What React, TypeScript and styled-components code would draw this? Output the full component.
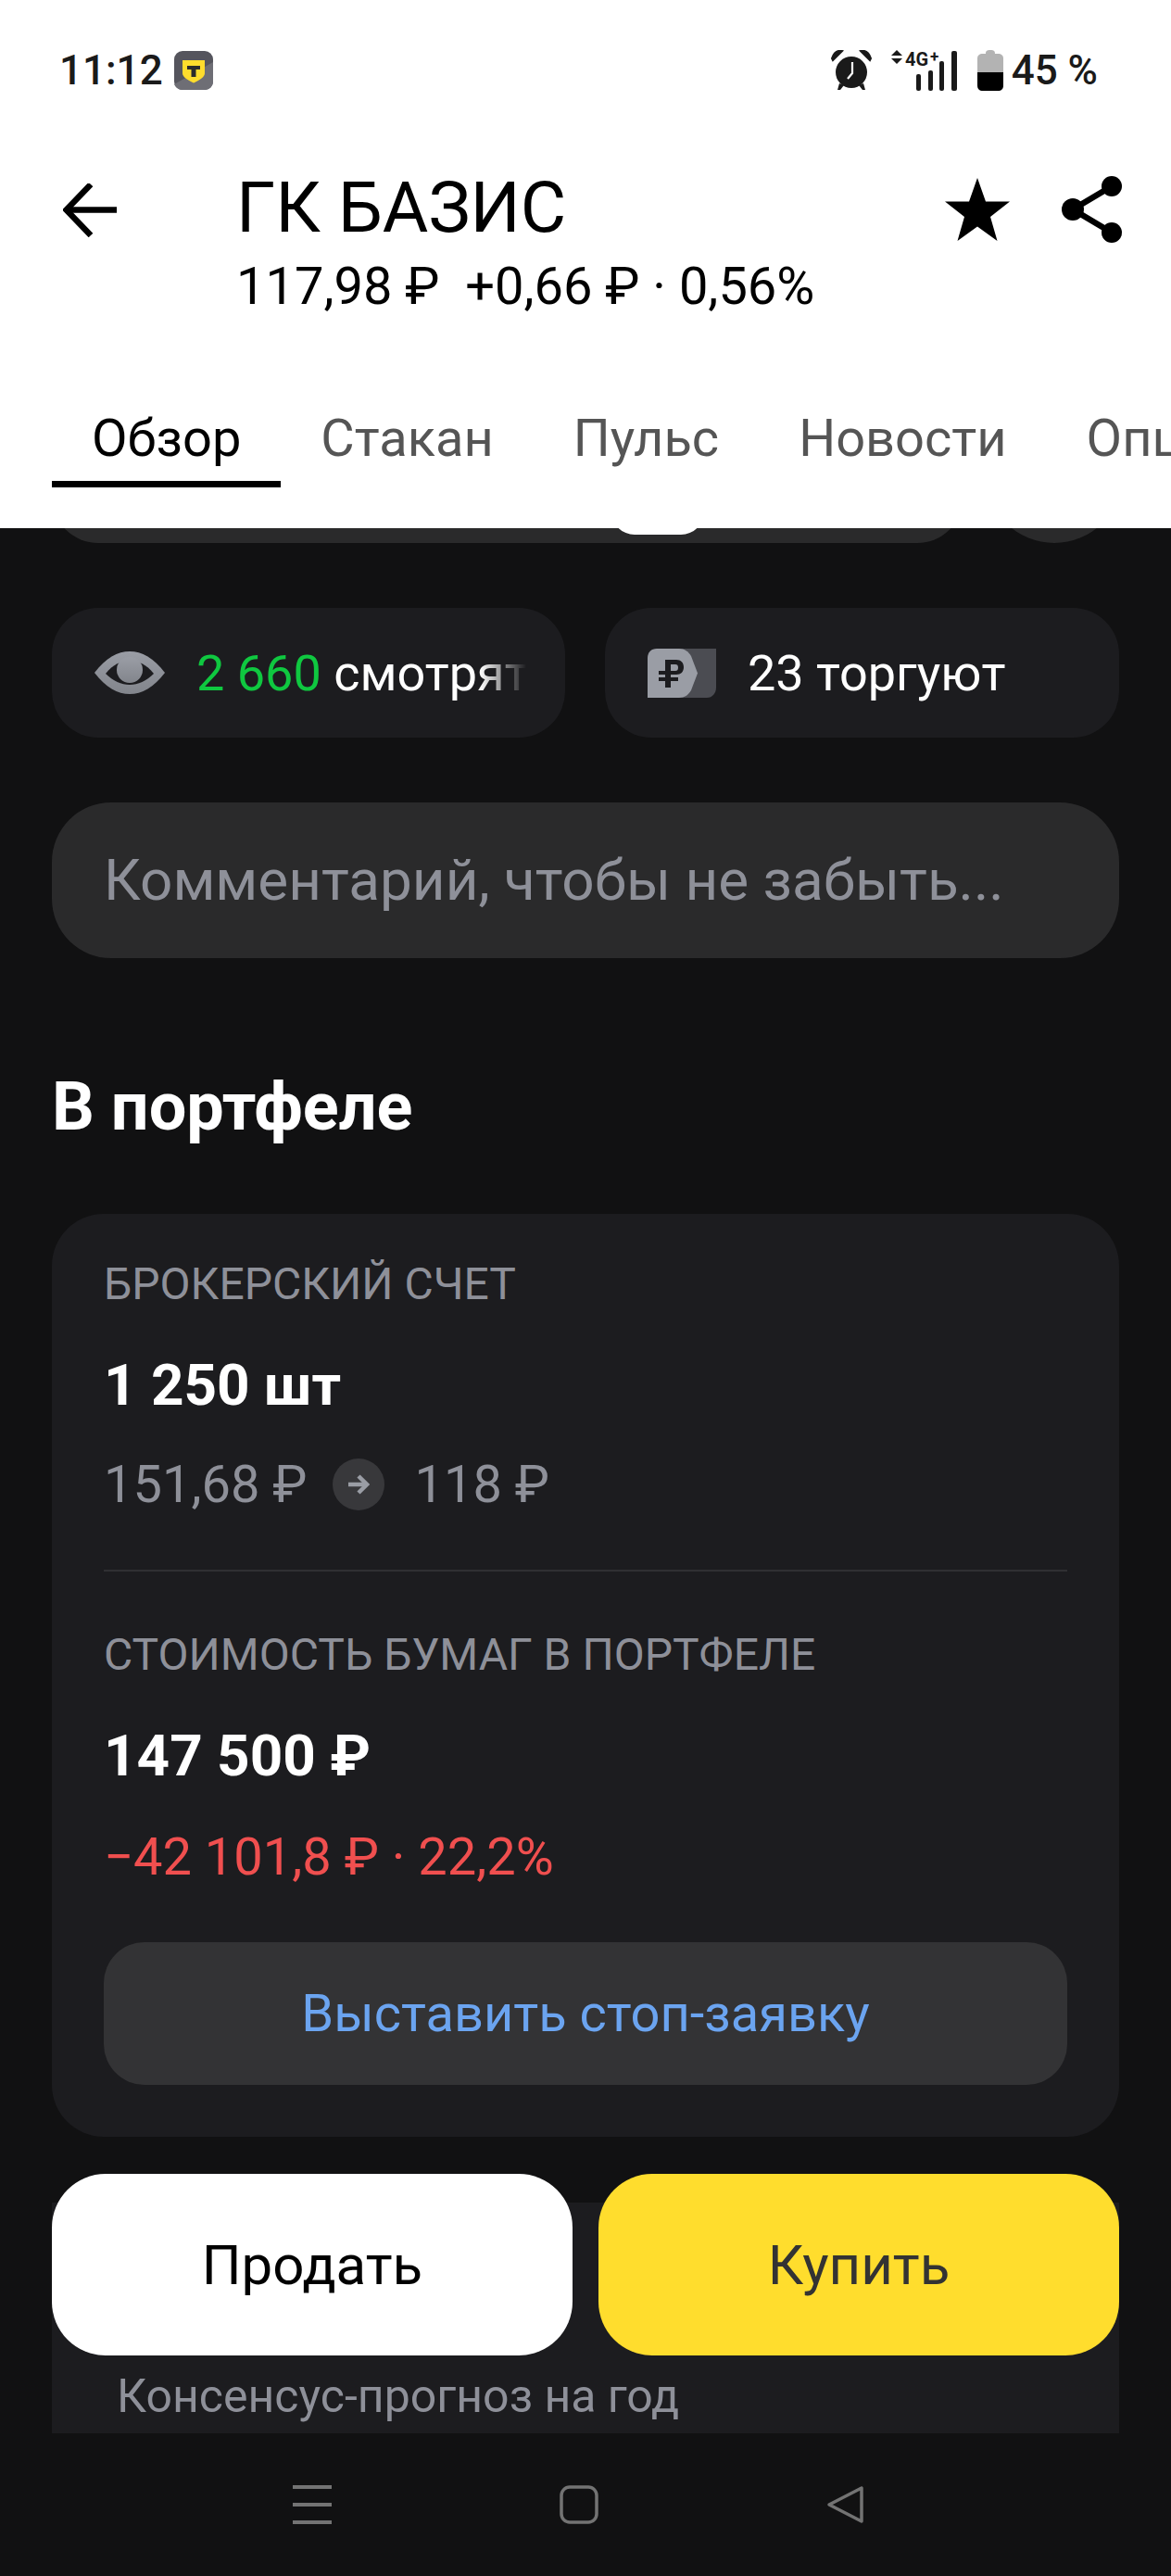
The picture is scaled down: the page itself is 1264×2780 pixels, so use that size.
import React, { FC, ReactNode } from 'react'
import styled, { createGlobalStyle } from 'styled-components'

const GlobalStyle = createGlobalStyle`
  html, body {
    margin: 0;
    padding: 0;
    background: #111112;
  }
  * {
    box-sizing: border-box;
  }
`

const BackIcon: FC = () => (
  <svg width="58" height="58" viewBox="0 0 58 58" fill="none" stroke="#000" strokeWidth="6.5">
    <path d="M58 28.5H4" />
    <path d="M30 1L3.5 28.5L30 56" />
  </svg>
)

const StarIcon: FC = () => (
  <svg width="70" height="68" viewBox="0 0 70 68" fill="#000">
    <path d="M35 0L44 25.5H70L49 42L56.5 68L35 52.5L13.5 68L21 42L0 25.5H26Z" />
  </svg>
)

const ShareIcon: FC = () => (
  <svg width="66" height="72" viewBox="0 0 66 72" fill="#000" stroke="#000">
    <path d="M54 11L12 36L54 61" fill="none" strokeWidth="6.5" />
    <circle cx="54" cy="11" r="11" stroke="none" />
    <circle cx="12" cy="36" r="12" stroke="none" />
    <circle cx="54" cy="61" r="11" stroke="none" />
  </svg>
)

const AlarmIcon: FC = () => (
  <svg width="44" height="44" viewBox="0 0 44 44" fill="#1a1a1a">
    <circle cx="22" cy="24" r="17" />
    <path d="M1 9C3 3 7 0 12 1L2 11Z" stroke="#1a1a1a" strokeWidth="2" />
    <path d="M43 9C41 3 37 0 32 1L42 11Z" stroke="#1a1a1a" strokeWidth="2" />
    <path d="M9 36L7 43H10L14 38Z" />
    <path d="M35 36L37 43H34L30 38Z" />
    <path d="M23 13V25L18 31" fill="none" stroke="#fff" strokeWidth="2.2" />
  </svg>
)

const SignalIcon: FC = () => (
  <svg width="72" height="44" viewBox="0 0 72 44" fill="#1a1a1a">
    <path d="M0 6L6 0L12 6Z" />
    <path d="M0 9L6 15L12 9Z" />
    <rect x="27" y="26" width="5" height="18" rx="2" />
    <rect x="40" y="22" width="5" height="22" rx="2" />
    <rect x="52" y="12" width="5" height="32" rx="2" />
    <rect x="65" y="1" width="6" height="43" rx="2" />
    <text x="15" y="17" fontFamily="Roboto, sans-serif" fontSize="20" fontWeight="700">4G</text>
    <text x="42" y="13" fontFamily="Roboto, sans-serif" fontSize="17" fontWeight="700">+</text>
  </svg>
)

const BatteryIcon: FC = () => (
  <svg width="28" height="44" viewBox="0 0 28 44">
    <path d="M9 4C9 1 10 0 14 0S19 1 19 4H22C26 4 28 6 28 9V24H0V9C0 6 2 4 6 4Z" fill="#b3b3b3" />
    <path d="M0 24H28V38C28 42 26 44 22 44H6C2 44 0 42 0 38Z" fill="#000" />
  </svg>
)

const BankIcon: FC = () => (
  <svg width="42" height="42" viewBox="0 0 42 42">
    <rect width="42" height="42" rx="9" fill="#55555d" />
    <path d="M0 36L42 12V33C42 38 38 42 33 42H9C5 42 2 40 0 36Z" fill="#6e6e75" />
    <path d="M9 10H33V24C33 28 28 31 21 34.5C14 31 9 28 9 24Z" fill="#ffdd2d" />
    <path d="M14 16H28V20H23.5V28H18.5V20H14Z" fill="#2c2c2c" />
  </svg>
)

const EyeIcon: FC = () => (
  <svg width="76" height="46" viewBox="0 0 76 46">
    <defs>
      <linearGradient id="eyeFill" x1="0" y1="0" x2="0" y2="1">
        <stop offset="0" stopColor="#9a9da5" />
        <stop offset="1" stopColor="#82858c" />
      </linearGradient>
    </defs>
    <path d="M0 23C12 7 25 0 38 0S64 7 76 23C64 39 51 46 38 46S12 39 0 23Z" fill="url(#eyeFill)" />
    <path d="M12 24C20 14 29 10 38 10S56 14 64 24C56 32 47 36 38 36S20 32 12 24Z" fill="#1c1c1f" />
    <circle cx="38" cy="20" r="14" fill="url(#eyeFill)" />
  </svg>
)

const RubleIcon: FC = () => (
  <svg width="74" height="53" viewBox="0 0 74 53">
    <path d="M30 0H74V42C74 48 70 53 64 53H30Z" fill="#4b4c52" />
    <path d="M10 0H34C40 0 44 3 47 8L54 26.5L47 45C44 50 40 53 34 53H0V10C0 4 4 0 10 0Z" fill="#9a9da5" />
    <path d="M20 12H31C36 12 39 15 39 20C39 25 36 28 31 28H25V31H33V35H25V42H19V35H12V31H19V28H12V24H19V12ZM25 17V24H30C32 24 33 23 33 20.5C33 18 32 17 30 17Z" fill="#1c1c1f" />
  </svg>
)

const ArrowIcon: FC = () => (
  <svg width="24" height="22" viewBox="0 0 24 22" fill="none" stroke="#9a9da5" strokeWidth="4.5">
    <path d="M1 11H20" />
    <path d="M12 2L21 11L12 20" />
  </svg>
)

const MenuIcon: FC = () => (
  <svg width="42" height="42" viewBox="0 0 42 42" fill="#737373">
    <rect y="0" width="42" height="4" />
    <rect y="19" width="42" height="4" />
    <rect y="38" width="42" height="4" />
  </svg>
)

const HomeIcon: FC = () => (
  <svg width="42" height="42" viewBox="0 0 42 42" fill="none" stroke="#737373" strokeWidth="3.5">
    <rect x="2" y="2" width="38" height="38" rx="9" />
  </svg>
)

const TriangleIcon: FC = () => (
  <svg width="42" height="42" viewBox="0 0 42 42" fill="none" stroke="#737373" strokeWidth="3.5" strokeLinejoin="round">
    <path d="M38 3V39L3 21Z" />
  </svg>
)

const tabs = ['Обзор', 'Стакан', 'Пульс', 'Новости', 'Опционы']

const Card: FC<{ children: ReactNode }> = ({ children }) => <CardBox>{children}</CardBox>

export default function App() {
  return (
    <Screen>
      <GlobalStyle />
      <TopPanel>
        <StatusBar>
          <StatusGroup>
            <StatusTime>11:12</StatusTime>
            <BankIcon />
          </StatusGroup>
          <StatusGroup>
            <AlarmIcon />
            <SignalIcon />
            <BatteryIcon />
            <StatusPercent>45 %</StatusPercent>
          </StatusGroup>
        </StatusBar>
        <Toolbar>
          <BackSlot>
            <BackIcon />
          </BackSlot>
          <TitleBlock>
            <Title>ГК БАЗИС</Title>
            <Price>117,98 ₽&nbsp; +0,66 ₽ · 0,56%</Price>
          </TitleBlock>
          <ToolbarActions>
            <StarIcon />
            <ShareIcon />
          </ToolbarActions>
        </Toolbar>
        <Tabs>
          {tabs.map((tab, index) => (
            <Tab key={tab} $active={index === 0}>
              {tab}
            </Tab>
          ))}
        </Tabs>
      </TopPanel>

      <Content>
        <ScrolledRow>
          <ScrolledWide>
            <ScrolledThumb />
          </ScrolledWide>
          <ScrolledRound />
        </ScrolledRow>

        <Chips>
          <Chip>
            <EyeIcon />
            <ChipFade>
              <Green>2 660</Green> смотрят
            </ChipFade>
          </Chip>
          <Chip>
            <RubleIcon />
            <ChipText>23 торгуют</ChipText>
          </Chip>
        </Chips>

        <Comment>Комментарий, чтобы не забыть...</Comment>

        <Heading>В портфеле</Heading>

        <Card>
          <Label>БРОКЕРСКИЙ СЧЕТ</Label>
          <Amount>1 250 шт</Amount>
          <PriceRow>
            <span>151,68 ₽</span>
            <ArrowBadge>
              <ArrowIcon />
            </ArrowBadge>
            <span>118 ₽</span>
          </PriceRow>
          <Divider />
          <Label>СТОИМОСТЬ БУМАГ В ПОРТФЕЛЕ</Label>
          <Amount>147 500 ₽</Amount>
          <Loss>−42 101,8 ₽ · 22,2%</Loss>
          <StopButton>Выставить стоп-заявку</StopButton>
        </Card>

        <ForecastCard>
          <ForecastTitle>Консенсус-прогноз на год</ForecastTitle>
        </ForecastCard>
      </Content>

      <TradeBar>
        <TradeButton $kind="sell">Продать</TradeButton>
        <TradeButton $kind="buy">Купить</TradeButton>
      </TradeBar>

      <NavBar>
        <MenuIcon />
        <HomeIcon />
        <TriangleIcon />
      </NavBar>
    </Screen>
  )
}

const Screen = styled.div`
  position: relative;
  width: 1264px;
  height: 2780px;
  overflow: hidden;
  background: #111112;
  font-family: Roboto, 'Noto Sans', sans-serif;
`

const TopPanel = styled.header`
  position: relative;
  z-index: 2;
  height: 570px;
  background: #fff;
`

const StatusBar = styled.div`
  display: flex;
  justify-content: space-between;
  align-items: center;
  height: 44px;
  margin-top: 0;
  padding: 0 79px 0 64px;
  transform: translateY(54px);
`

const StatusGroup = styled.div`
  display: flex;
  align-items: center;
  gap: 21px;
`

const StatusTime = styled.span`
  width: 103px;
  margin-right: 0;
  font-size: 44px;
  font-weight: 500;
  color: #1a1a1a;
`

const StatusPercent = styled.span`
  margin-left: -12px;
  font-size: 44px;
  font-weight: 500;
  color: #1a1a1a;
`

const Toolbar = styled.div`
  display: flex;
  align-items: flex-start;
  height: 230px;
  margin-top: 146px;
  padding: 0 0 0 68px;
`

const BackSlot = styled.div`
  width: 187px;
  padding-top: 8px;
`

const TitleBlock = styled.div`
  flex: 1;
  margin-top: -14px;
`

const Title = styled.div`
  font-size: 76px;
  line-height: 96px;
  color: #000;
`

const Price = styled.div`
  margin-top: 0;
  font-size: 56px;
  line-height: 74px;
  color: #000;
`

const ToolbarActions = styled.div`
  display: flex;
  align-items: center;
  gap: 56px;
  padding-right: 52px;
`

const Tabs = styled.nav`
  display: flex;
  gap: 0;
  height: 106px;
  overflow: hidden;
  padding-left: 56px;
`

const Tab = styled.div<{ $active: boolean }>`
  flex: none;
  height: 100%;
  padding: 16px 43px 0;
  margin-right: 0;
  font-size: 56px;
  line-height: 74px;
  color: ${({ $active }) => ($active ? '#000' : '#555')};
  border-bottom: 7px solid ${({ $active }) => ($active ? '#000' : 'transparent')};
`

const Content = styled.main`
  padding: 0 56px;
`

const ScrolledRow = styled.div`
  display: flex;
  justify-content: space-between;
  height: 100px;
  margin-top: -84px;
`

const ScrolledWide = styled.div`
  position: relative;
  width: 984px;
  border-radius: 50px;
  background: #2a2a2b;
`

const ScrolledThumb = styled.div`
  position: absolute;
  z-index: 3;
  left: 604px;
  bottom: 9px;
  width: 100px;
  height: 50px;
  border-radius: 25px;
  background: #fff;
`

const ScrolledRound = styled.div`
  width: 148px;
  height: 100px;
  margin-right: -4px;
  border-radius: 0 0 74px 74px;
  background: #2a2a2b;
`

const Chips = styled.div`
  display: grid;
  grid-template-columns: 554px 555px;
  justify-content: space-between;
  margin-top: 70px;
`

const Chip = styled.div`
  display: flex;
  align-items: center;
  gap: 34px;
  height: 140px;
  padding-left: 46px;
  overflow: hidden;
  border-radius: 50px;
  background: #1c1c1f;
`

const ChipText = styled.span`
  font-size: 54px;
  color: #fff;
  white-space: nowrap;
`

const ChipFade = styled(ChipText)`
  width: 356px;
  overflow: hidden;
  -webkit-mask-image: linear-gradient(to right, #000 86%, transparent 100%);
  mask-image: linear-gradient(to right, #000 86%, transparent 100%);
`

const Green = styled.span`
  color: #0fc840;
`

const Comment = styled.div`
  height: 168px;
  margin-top: 70px;
  padding-left: 56px;
  border-radius: 64px;
  background: #2a2a2b;
  font-size: 62px;
  line-height: 168px;
  color: #8e9099;
`

const Heading = styled.h2`
  margin: 116px 0 0;
  font-size: 72px;
  line-height: 90px;
  font-weight: 700;
  color: #fff;
`

const CardBox = styled.section`
  margin-top: 70px;
  padding: 46px 56px 56px;
  border-radius: 56px;
  background: #1c1c1f;
`

const Label = styled.div`
  font-size: 48px;
  line-height: 60px;
  color: #8e9099;
`

const Amount = styled.div`
  margin-top: 48px;
  font-size: 62px;
  line-height: 62px;
  font-weight: 700;
  color: #fff;
`

const PriceRow = styled.div`
  display: flex;
  align-items: center;
  height: 60px;
  margin-top: 46px;
  font-size: 56px;
  line-height: 60px;
  color: #8e9099;
`

const ArrowBadge = styled.span`
  display: flex;
  align-items: center;
  justify-content: center;
  width: 56px;
  height: 56px;
  margin: 0 32px 0 28px;
  border-radius: 50%;
  background: #38383b;
`

const Divider = styled.div`
  height: 2px;
  margin: 62px 0 60px;
  background: #303033;
`

const Loss = styled.div`
  margin-top: 48px;
  font-size: 56px;
  line-height: 60px;
  color: #f04f4f;
`

const StopButton = styled.button`
  display: block;
  width: 100%;
  height: 154px;
  margin-top: 62px;
  padding: 0;
  border: 0;
  border-radius: 44px;
  background: #333335;
  font: inherit;
  font-size: 56px;
  color: #6ba4f0;
`

const ForecastCard = styled.section`
  height: 400px;
  margin-top: 71px;
  padding: 176px 70px 0;
  background: #1c1c1f;
`

const ForecastTitle = styled.div`
  font-size: 50px;
  line-height: 66px;
  color: #8e9099;
`

const TradeBar = styled.div`
  position: absolute;
  z-index: 3;
  left: 56px;
  right: 56px;
  top: 2346px;
  display: grid;
  grid-template-columns: 1fr 1fr;
  gap: 28px;
`

const TradeButton = styled.button<{ $kind: 'sell' | 'buy' }>`
  height: 196px;
  padding: 0;
  border: 0;
  border-radius: 58px;
  background: ${({ $kind }) => ($kind === 'sell' ? '#fff' : '#ffdd2d')};
  font: inherit;
  font-size: 60px;
  color: ${({ $kind }) => ($kind === 'sell' ? '#000' : '#333')};
`

const NavBar = styled.nav`
  position: absolute;
  z-index: 3;
  left: 0;
  right: 0;
  bottom: 0;
  height: 154px;
  display: flex;
  align-items: flex-start;
  gap: 246px;
  padding: 56px 0 0 316px;
  background: #111112;
`
